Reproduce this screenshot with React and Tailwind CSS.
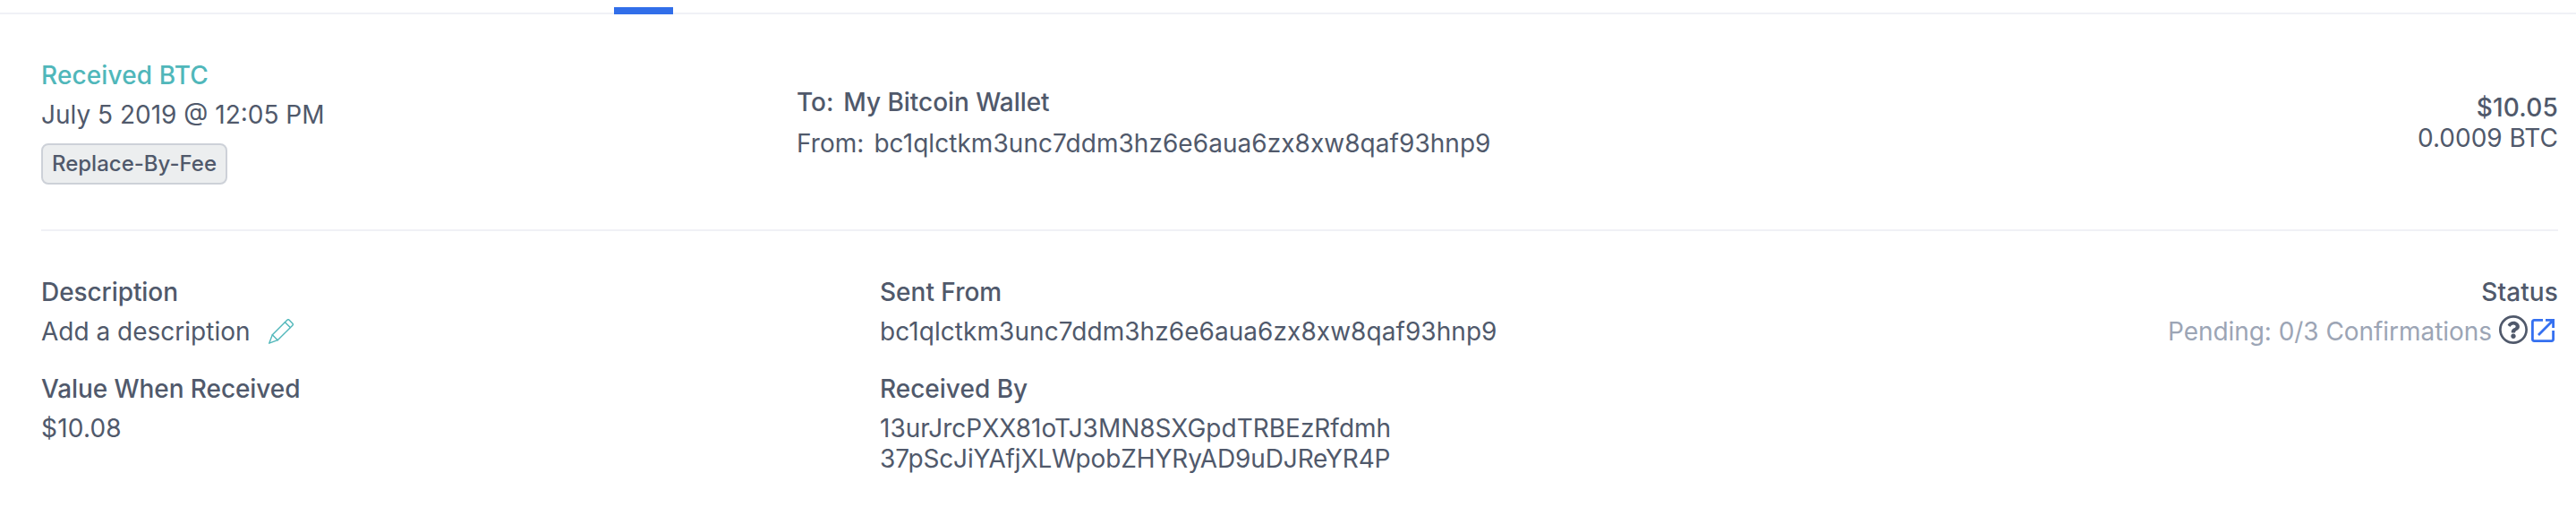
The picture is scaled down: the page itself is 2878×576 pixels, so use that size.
function PencilIcon() {
  return (
    <svg className="mt-[3px] h-7 w-7" viewBox="0 0 28 28" fill="none" stroke="#50b7ba" strokeWidth="1.4" strokeLinejoin="round" strokeLinecap="round">
      <path d="M.7 27.2 4.3 17.8 20.8 1.3Q22 .1 23.2 1.3L26.8 4.9Q28 6.1 26.8 7.3L10.2 23.7Z" />
      <path d="M4.3 17.8 10.2 23.7M18.4 3.7l5.9 5.9" />
    </svg>
  );
}

function HelpIcon() {
  return (
    <svg className="h-8 w-8" viewBox="8 8 496 496" fill="#50596b">
      <path d="M256 8C119.043 8 8 119.083 8 256c0 136.997 111.043 248 248 248s248-111.003 248-248C504 119.083 392.957 8 256 8zm0 454c-113.8 0-206-92.2-206-206 0-113.8 92.2-206 206-206 113.8 0 206 92.2 206 206 0 113.8-92.2 206-206 206zm107.244-261.2c0 67.052-72.421 68.084-72.421 92.863V300c0 6.627-5.373 12-12 12h-45.647c-6.627 0-12-5.373-12-12v-8.659c0-35.745 27.1-50.034 47.579-61.516 17.561-9.845 28.324-16.541 28.324-29.579 0-17.246-21.999-28.693-39.784-28.693-23.189 0-33.894 10.977-48.942 29.969-4.057 5.12-11.46 6.071-16.666 2.124l-27.824-21.098c-5.107-3.872-6.251-11.066-2.644-16.363C184.846 131.491 214.94 112 261.794 112c49.071 0 101.45 38.304 101.45 88.8zM298 368c0 23.159-18.841 42-42 42s-42-18.841-42-42 18.841-42 42-42 42 18.841 42 42z" />
    </svg>
  );
}

function OpenIcon() {
  return (
    <svg className="h-[26px] w-[26px]" viewBox="0 0 26 26" fill="none" stroke="#3570f0" strokeWidth="2.8">
      <path d="M13 1.4H3.4q-2 0-2 2v19.2q0 2 2 2h19.2q2 0 2-2V13" />
      <path d="M16 1.4h8.6V10M24.2 1.8 8 18" />
    </svg>
  );
}

export default function App() {
  return (
    <div className="h-[576px] w-[2878px] overflow-hidden bg-white font-['Inter',sans-serif] text-[28px] leading-[34px] text-[#50596b]">
      <div className="flex h-4 items-end border-b-2 border-[#f0f1f6] pl-[686px]">
        <div className="-mb-0.5 h-2 w-[66px] shrink-0 bg-[#316ee9]" />
      </div>
      <div className="ml-[46px] mr-5">
        <div className="flex h-[242px] border-b-2 border-[#f0f1f6] pt-[51px]">
          <div className="flex w-[844px] flex-col items-start">
            <div className="font-[450] tracking-[0.12px] text-[#50b7ba]">Received BTC</div>
            <div className="mt-2.5">July 5 2019 @ 12:05 PM</div>
            <div className="mt-[15px] flex h-[46px] w-[208px] items-center justify-center whitespace-nowrap rounded-lg border-2 border-[#cdd1d8] bg-[#eceeef] text-2xl font-medium">
              Replace-By-Fee
            </div>
          </div>
          <div className="flex flex-col gap-3 pt-[30px]">
            <div className="flex gap-[11px] font-medium tracking-[-0.05px]"><span>To:</span><span>My Bitcoin Wallet</span></div>
            <div className="flex gap-[11px] tracking-[0.05px]"><span>From:</span><span>bc1qlctkm3unc7ddm3hz6e6aua6zx8xw8qaf93hnp9</span></div>
          </div>
          <div className="ml-auto pt-9 text-right">
            <div className="font-medium tracking-[0.2px]">$10.05</div>
            <div>0.0009 BTC</div>
          </div>
        </div>
        <div className="flex pt-[51px]">
          <div className="w-[937px]">
            <div className="font-medium tracking-[-0.08px]">Description</div>
            <div className="mt-2.5 flex h-[34px] gap-5"><span>Add a description</span><PencilIcon /></div>
            <div className="mt-[30px] font-medium tracking-[-0.08px]">Value When Received</div>
            <div className="mt-2.5 tracking-[0.2px]">$10.08</div>
          </div>
          <div>
            <div className="font-medium">Sent From</div>
            <div className="mt-2.5 tracking-[0.06px]">bc1qlctkm3unc7ddm3hz6e6aua6zx8xw8qaf93hnp9</div>
            <div className="mt-[30px] font-medium">Received By</div>
            <div className="mt-2.5">13urJrcPXX81oTJ3MN8SXGpdTRBEzRfdmh</div>
            <div className="tracking-[-0.14px]">37pScJiYAfjXLWpobZHYRyAD9uDJReYR4P</div>
          </div>
          <div className="ml-auto text-right">
            <div className="font-medium tracking-[0.1px]">Status</div>
            <div className="mt-2.5 flex items-start">
              <span className="mr-2 tracking-[-0.05px] text-[#9ca5b5]">Pending: 0/3 Confirmations</span>
              <div className="-mt-px"><HelpIcon /></div>
              <div className="ml-1 mr-1 mt-[3px]"><OpenIcon /></div>
            </div>
          </div>
        </div>
      </div>
    </div>
  );
}
